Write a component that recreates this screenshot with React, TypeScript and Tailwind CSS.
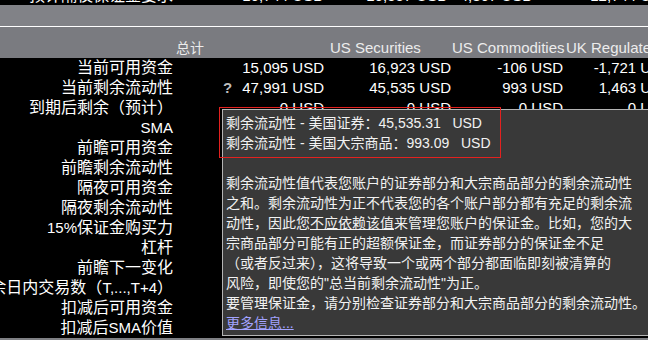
import React from "react";

const L = ({ children }: { children: React.ReactNode }) => (
  <span className="text-[15px]">{children}</span>
);

type Row = { label: React.ReactNode; v?: React.ReactNode[]; q?: boolean };

const rows: Row[] = [
  { label: "当前可用资金", v: ["15,095 USD", "16,923 USD", "-106 USD", "-1,721 USD"] },
  { label: "当前剩余流动性", v: ["47,991 USD", "45,535 USD", "993 USD", "1,463 USD"], q: true },
  { label: "到期后剩余（预计）", v: ["0 USD", "0 USD", "0 USD", "0 USD"] },
  { label: <L>SMA</L> },
  { label: "前瞻可用资金" },
  { label: "前瞻剩余流动性" },
  { label: "隔夜可用资金" },
  { label: "隔夜剩余流动性" },
  { label: <><L>15%</L>保证金购买力</> },
  { label: "杠杆" },
  { label: "前瞻下一变化" },
  { label: <>剩余日内交易数（<L>T,...,T+4</L>）</> },
  { label: "扣减后可用资金" },
  { label: <>扣减后<L>SMA</L>价值</> },
];

const grid = "grid grid-cols-[173px_151px_127px_112px_109px]";

export default function App() {
  return (
    <div className="relative w-[648px] h-[340px] overflow-hidden bg-black text-white font-['Liberation_Sans','Noto_Sans_CJK_SC',sans-serif]">
      {/* clipped top row */}
      <div className="h-[5px] overflow-hidden">
        <div className={`${grid} h-[20px] mt-[-14px] leading-[20px] whitespace-nowrap`}>
          <div className="flex justify-end text-[16px]">预计隔夜保证金要求</div>
          <div className="flex justify-end text-[15px]">16,744 USD</div>
          <div className="flex justify-end text-[15px] pr-[3px]">16,557 USD</div>
          <div className="flex justify-end text-[15px] pr-[30px]">4,867 USD</div>
          <div className="flex justify-end text-[15px]">12,744 USD</div>
        </div>
      </div>
      <div className="h-[21px] bg-[#818287]" />
      <div className="h-px bg-white" />
      {/* header */}
      <div className={`${grid} h-[31px] bg-[#7a7b80] items-end text-[15px] leading-[20px] text-[#ececec] whitespace-nowrap`}>
        <div />
        <div className="pl-[3px] text-[14px]">总计</div>
        <div className="pl-[6px]">US Securities</div>
        <div className="pl-[1px]">US Commodities</div>
        <div className="pl-[3px]">UK Regulated</div>
      </div>
      {/* rows */}
      <div className="flex flex-col">
        {rows.map((r, i) => (
          <div key={i} className={`${grid} h-[20px] leading-[20px] whitespace-nowrap`}>
            <div className="flex justify-end text-[16px]">{r.label}</div>
            {r.v ? (
              <>
                <div className="flex justify-end items-center gap-[10px] text-[15px]">
                  {r.q && <span className="font-bold text-[#bdbdbd]">?</span>}
                  <span>{r.v[0]}</span>
                </div>
                <div className="flex justify-end text-[15px]">{r.v[1]}</div>
                <div className="flex justify-end text-[15px]">{r.v[2]}</div>
                <div className="flex justify-end text-[15px]">{r.v[3]}</div>
              </>
            ) : (
              <>
                <div />
                <div />
                <div />
                <div />
              </>
            )}
          </div>
        ))}
      </div>
      <div className="h-[2px] bg-[#7f8084]" />

      {/* tooltip */}
      <div className="absolute left-[222px] top-[109px] w-[440px] h-[227px] bg-[#393939] border-l border-t border-b border-[#b4b4b4] pl-[3px] pt-[3px] text-[14px] leading-[20px] text-[#f2f2f2] whitespace-nowrap">
        <div className="whitespace-pre">剩余流动性 - 美国证券：45,535.31   USD</div>
        <div className="whitespace-pre">剩余流动性 - 美国大宗商品：993.09   USD</div>
        <div className="h-[20px]" />
        <div>剩余流动性值代表您账户的证券部分和大宗商品部分的剩余流动性</div>
        <div>之和。剩余流动性为正不代表您的各个账户部分都有充足的剩余流</div>
        <div>
          动性，因此您<span className="underline">不应依赖该值</span>来管理您账户的保证金。比如，您的大
        </div>
        <div>宗商品部分可能有正的超额保证金，而证券部分的保证金不足</div>
        <div>（或者反过来），这将导致一个或两个部分都面临即刻被清算的</div>
        <div>风险，即使您的"总当前剩余流动性"为正。</div>
        <div>要管理保证金，请分别检查证券部分和大宗商品部分的剩余流动性。</div>
        <div className="text-[#a3a3ff] underline">更多信息...</div>
      </div>
      {/* red highlight */}
      <div className="absolute left-[219px] top-[107px] w-[282px] h-[51px] border border-[#e3211f]" />
    </div>
  );
}
